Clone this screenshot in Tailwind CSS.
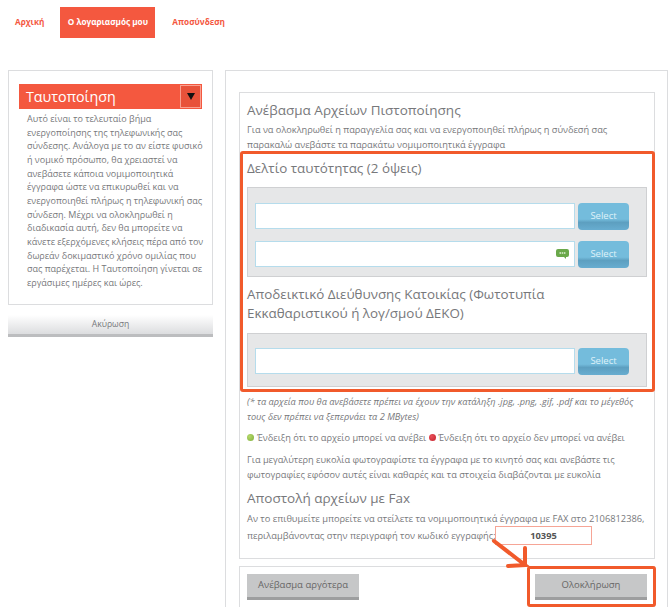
<!doctype html>
<html>
<head>
  <meta charset="UTF-8">
  <script src="https://cdn.jsdelivr.net/npm/@tailwindcss/browser@4"></script>
  <title>Ταυτοποίηση</title>
</head>
<body class="relative w-[670px] h-[607px] overflow-hidden bg-white text-[#77787b] font-['Open_Sans','Noto_Sans',sans-serif]">

  <!-- menu -->
  <nav class="flex h-[31px] mt-[7px] pl-[15px] items-center text-[8.2px] font-bold text-[#f4583f]">
    <a class="mr-[16px]">Αρχική</a>
    <a class="flex items-center justify-center w-[95px] h-[31px] bg-[#f4583f] text-white">Ο λογαριασμός μου</a>
    <a class="ml-[17px]">Αποσύνδεση</a>
  </nav>

  <div class="flex items-start mt-[32px] pl-[8px]">
    <!-- left column -->
    <div class="w-[205px] shrink-0">
      <div class="h-[235px] border border-[#dcdddf] pt-[13px] px-[10px]">
        <div class="flex items-center justify-between h-[25px] bg-[#f4583f] pl-[7px] pr-[1px] text-[14.3px] text-white">
          <span>Ταυτοποίηση</span>
          <span class="flex items-center justify-center w-[21px] h-[23px] border border-[#f9a090] bg-[#e8523a]">
            <svg width="8" height="7" viewBox="0 0 8 7"><path d="M0 0h8L4 7z" fill="#111"/></svg>
          </span>
        </div>
        <p class="mt-[3px] pl-[8px] text-[9px] leading-[13.65px] whitespace-nowrap">Αυτό είναι το τελευταίο βήμα<br>ενεργοποίησης της τηλεφωνικής σας<br>σύνδεσης. Ανάλογα με το αν είστε φυσικό<br>ή νομικό πρόσωπο, θα χρειαστεί να<br>ανεβάσετε κάποια νομιμοποιητικά<br>έγγραφα ώστε να επικυρωθεί και να<br>ενεργοποιηθεί πλήρως η τηλεφωνική σας<br>σύνδεση. Μέχρι να ολοκληρωθεί η<br>διαδικασία αυτή, δεν θα μπορείτε να<br>κάνετε εξερχόμενες κλήσεις πέρα από τον<br>δωρεάν δοκιμαστικό χρόνο ομιλίας που<br>σας παρέχεται. Η Ταυτοποίηση γίνεται σε<br>εργάσιμες ημέρες και ώρες.</p>
      </div>
      <div class="flex items-center justify-center h-[22px] mt-[10px] border-b-[3px] border-[#bcbdbf] bg-gradient-to-b from-white to-[#dcdddf] text-[8.6px]">Ακύρωση</div>
    </div>

    <!-- right column -->
    <div class="w-[443px] ml-[12px] h-[560px] border border-[#dcdddf] pt-[21px] px-[13px]">
      <div class="h-[467px] w-[416px] border border-[#dcdddf] px-[7px] pt-[7px]">
        <h2 class="text-[13.5px] leading-[20px]">Ανέβασμα Αρχείων Πιστοποίησης</h2>
        <p class="mt-[2px] text-[9.2px] leading-[15px]">Για να ολοκληρωθεί η παραγγελία σας και να ενεργοποιηθεί πλήρως η σύνδεσή σας<br>παρακαλώ ανεβάστε τα παρακάτω νομιμοποιητικά έγγραφα</p>

        <h3 class="mt-[6px] text-[13.4px] leading-[20px]">Δελτίο ταυτότητας (2 όψεις)</h3>
        <div class="flex flex-col gap-[11px] mt-[9px] h-[90px] border border-[#cfd0d2] bg-[#e6e7e8] pt-[15px] pl-[7px]">
          <div class="flex gap-[3px]">
            <div class="w-[320px] h-[26px] border border-[#b5dcec] bg-white"></div>
            <div class="flex items-center justify-center w-[51px] h-[27px] rounded-[4px] bg-[linear-gradient(#74bcdc_60%,#5d9fc0_72%,#68add0)] text-[9.5px] text-[#dff1f8]">Select</div>
          </div>
          <div class="flex gap-[3px]">
            <div class="flex items-center justify-end pr-[4px] w-[320px] h-[26px] border border-[#b5dcec] bg-white">
              <svg width="15" height="12" viewBox="0 0 15 12"><path d="M3 1h9a2 2 0 0 1 2 2v4a2 2 0 0 1-2 2h-1v2l-2-2H3a2 2 0 0 1-2-2V3a2 2 0 0 1 2-2z" fill="#6aa84a"/><path d="M4.500 5h6" stroke="#dff0d5" stroke-width="1.500" stroke-dasharray="1.500 .7"/></svg>
            </div>
            <div class="flex items-center justify-center w-[51px] h-[27px] rounded-[4px] bg-[linear-gradient(#74bcdc_60%,#5d9fc0_72%,#68add0)] text-[9.5px] text-[#dff1f8]">Select</div>
          </div>
        </div>

        <h3 class="mt-[8px] text-[13.4px] leading-[19px]">Αποδεικτικό Διεύθυνσης Κατοικίας (Φωτοτυπία<br>Εκκαθαριστικού ή λογ/σμού ΔΕΚΟ)</h3>
        <div class="flex gap-[3px] mt-[10px] h-[54px] border border-[#cfd0d2] bg-[#e6e7e8] pt-[14px] pl-[7px]">
          <div class="w-[320px] h-[26px] border border-[#b5dcec] bg-white"></div>
          <div class="flex items-center justify-center w-[51px] h-[27px] rounded-[4px] bg-[linear-gradient(#74bcdc_60%,#5d9fc0_72%,#68add0)] text-[9.5px] text-[#dff1f8]">Select</div>
        </div>

        <p class="mt-[7px] text-[9.2px] leading-[15px] italic">(* τα αρχεία που θα ανεβάσετε πρέπει να έχουν την κατάληξη .jpg, .png, .gif, .pdf και το μέγεθός<br>τους δεν πρέπει να ξεπερνάει τα 2 MBytes)</p>
        <p class="flex items-center mt-[6px] text-[9.2px] leading-[15px] whitespace-nowrap">
          <span class="w-[7px] h-[7px] mr-[3px] rounded-full bg-[radial-gradient(circle_at_35%_35%,#b5d96a,#7fae3c)]"></span>Ένδειξη ότι το αρχείο μπορεί να ανέβει
          <span class="w-[7px] h-[7px] ml-[3px] mr-[2px] rounded-full bg-[radial-gradient(circle_at_35%_35%,#e8505a,#c5222c)]"></span>Ένδειξη ότι το αρχείο δεν μπορεί να ανέβει
        </p>
        <p class="mt-[7px] text-[9.2px] leading-[15px]">Για μεγαλύτερη ευκολία φωτογραφίστε τα έγγραφα με το κινητό σας και ανεβάστε τις<br>φωτογραφίες εφόσον αυτές είναι καθαρές και τα στοιχεία διαβάζονται με ευκολία</p>
        <h3 class="mt-[6px] text-[13.5px] leading-[20px]">Αποστολή αρχείων με Fax</h3>
        <p class="mt-[3px] text-[9.3px] leading-[15px] whitespace-nowrap">Αν το επιθυμείτε μπορείτε να στείλετε τα νομιμοποιητικά έγγραφα με FAX στο 2106812386,</p>
        <div class="flex items-center h-[19px] text-[9.3px]">
          <span class="w-[248px] shrink-0 whitespace-nowrap">περιλαμβάνοντας στην περιγραφή τον κωδικό εγγραφής:</span>
          <span class="flex items-center justify-center w-[97px] h-[19px] border border-[#f6a596] font-bold text-[#555]">10395</span>
        </div>
      </div>

      <div class="flex justify-between w-[416px] h-[60px] mt-[7px] border border-[#dcdddf] pt-[7px] px-[7px]">
        <div class="flex items-center justify-center w-[112px] h-[26px] border-b-[3px] border-[#9d9e9f] bg-[#c6c7c8] text-[9.500px] text-[#666]">Ανέβασμα αργότερα</div>
        <div class="flex items-center justify-center w-[112px] h-[26px] border-b-[3px] border-[#9d9e9f] bg-[#c6c7c8] text-[9.500px] text-[#666]">Ολοκλήρωση</div>
      </div>
    </div>
  </div>

  <!-- annotations drawn over the page -->
  <div class="absolute left-[240px] top-[151px] w-[415px] h-[241px] rounded-[3px] border-[3px] border-[#f15a2b]"></div>
  <div class="absolute left-[527px] top-[566px] w-[129px] h-[41px] rounded-[3px] border-[3px] border-[#f15a2b]"></div>
  <svg class="absolute left-0 top-0" width="670" height="607" viewBox="0 0 670 607" fill="none">
    <path d="M494 541L525 565L508 566M525 565L525 548" stroke="#f15a2b" stroke-width="4" stroke-linecap="round"/>
  </svg>
</body>
</html>
